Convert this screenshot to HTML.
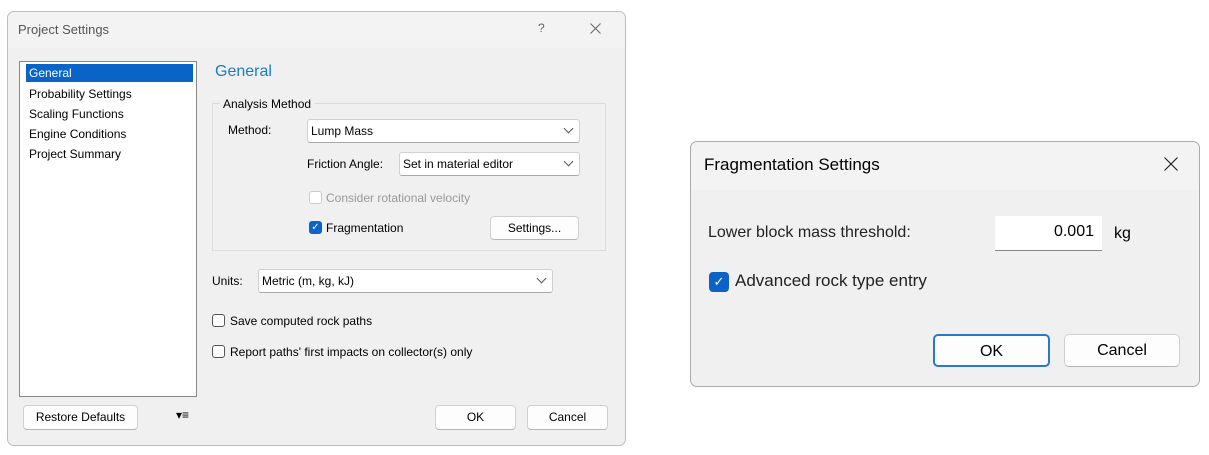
<!DOCTYPE html>
<html><head><style>
body{margin:0;width:1209px;height:455px;background:#fff;position:relative;overflow:hidden;font-family:"Liberation Sans",sans-serif;font-size:12px;color:#000}
.a{position:absolute}
.dlg{background:#f0f0f0;border:1px solid #bdbdbd;border-radius:7px;box-sizing:border-box}
.cb{background:#fff;border:1px solid #d0d0d0;border-bottom-color:#a8a8a8;border-radius:3px;box-sizing:border-box;padding:4px 3px;line-height:14px}
.btn{background:#fdfdfd;border:1px solid #d0d0d0;border-bottom-color:#b5b5b5;border-radius:4px;box-sizing:border-box;text-align:center}
.chk{width:13px;height:13px;border:1px solid #555;border-radius:3px;box-sizing:border-box;background:#fff}
.on{background:#0a64c8;border-color:#0a64c8}
.arr{position:absolute;right:7px;top:5px;width:6px;height:6px;border-right:1px solid #555;border-bottom:1px solid #555;transform:rotate(45deg)}
</style></head><body>
<div class="a dlg" style="left:7px;top:11px;width:619px;height:435px"></div>
<div class="a" style="left:8px;top:12px;width:617px;height:36px;background:#f3f3f3;border-radius:7px 7px 0 0"></div>
<div class="a" style="left:18px;top:22px;font-size:13px;color:#555">Project Settings</div>
<div class="a" style="left:538px;top:21px;color:#666">?</div>
<svg class="a" style="left:590px;top:23px" width="11" height="11"><path d="M0.5 0.5L10.5 10.5M10.5 0.5L0.5 10.5" stroke="#666" stroke-width="1"/></svg>
<div class="a" style="left:19px;top:61px;width:178px;height:336px;background:#fff;border:1px solid #888;box-sizing:border-box"></div>
<div class="a" style="left:26px;top:64px;width:167px;height:18px;background:#0a64c8"></div>
<div class="a" style="left:29px;top:66px;color:#fff">General</div>
<div class="a" style="left:29px;top:84px;line-height:20px">Probability Settings<br>Scaling Functions<br>Engine Conditions<br>Project Summary</div>
<div class="a" style="left:215px;top:63px;font-size:16px;color:#1a7cc4">General</div>
<div class="a" style="left:212px;top:103px;width:394px;height:148px;border:1px solid #dcdcdc;box-sizing:border-box"></div>
<div class="a" style="left:220px;top:97px;background:#f0f0f0;padding:0 3px">Analysis Method</div>
<div class="a" style="left:228px;top:123px">Method:</div>
<div class="a cb" style="left:307px;top:119px;width:273px;height:24px">Lump Mass<div class="arr"></div></div>
<div class="a" style="left:307px;top:157px">Friction Angle:</div>
<div class="a cb" style="left:399px;top:152px;width:181px;height:24px">Set in material editor<div class="arr"></div></div>
<div class="a chk" style="left:309px;top:191px;border-color:#ccc"></div>
<div class="a" style="left:326px;top:191px;color:#999">Consider rotational velocity</div>
<div class="a chk on" style="left:309px;top:221px;color:#fff;font-size:10px;line-height:11px;text-align:center">✓</div>
<div class="a" style="left:326px;top:221px">Fragmentation</div>
<div class="a btn" style="left:490px;top:216px;width:89px;height:24px;line-height:22px">Settings...</div>
<div class="a" style="left:212px;top:274px">Units:</div>
<div class="a cb" style="left:258px;top:269px;width:295px;height:24px">Metric (m, kg, kJ)<div class="arr"></div></div>
<div class="a chk" style="left:212px;top:314px"></div>
<div class="a" style="left:230px;top:314px">Save computed rock paths</div>
<div class="a chk" style="left:212px;top:345px"></div>
<div class="a" style="left:230px;top:345px">Report paths' first impacts on collector(s) only</div>
<div class="a btn" style="left:23px;top:405px;width:115px;height:25px;line-height:23px">Restore Defaults</div>
<div class="a" style="left:176px;top:408px;font-size:12px">▾≡</div>
<div class="a btn" style="left:435px;top:405px;width:81px;height:25px;line-height:23px">OK</div>
<div class="a btn" style="left:527px;top:405px;width:81px;height:25px;line-height:23px">Cancel</div>

<div class="a dlg" style="left:690px;top:141px;width:510px;height:246px;border-color:#aaa"></div>
<div class="a" style="left:691px;top:142px;width:508px;height:48px;background:#f3f3f3;border-radius:7px 7px 0 0"></div>
<div class="a" style="left:704px;top:155px;font-size:17px">Fragmentation Settings</div>
<svg class="a" style="left:1164px;top:157px" width="14" height="14"><path d="M0.5 0.5L13.5 13.5M13.5 0.5L0.5 13.5" stroke="#222" stroke-width="1.2"/></svg>
<div class="a" style="left:708px;top:224px;font-size:16px;color:#222">Lower block mass threshold:</div>
<div class="a" style="left:995px;top:216px;width:107px;height:35px;background:#fff;border-bottom:1px solid #888;box-sizing:border-box;text-align:right;padding:7px 8px 0 0;font-size:16px">0.001</div>
<div class="a" style="left:1114px;top:225px;font-size:16px">kg</div>
<div class="a" style="left:709px;top:272px;width:20px;height:20px;background:#0a64c8;border-radius:4px;color:#fff;text-align:center;font-size:13px;line-height:20px">✓</div>
<div class="a" style="left:735px;top:271px;font-size:17px;color:#222">Advanced rock type entry</div>
<div class="a btn" style="left:933px;top:334px;width:117px;height:33px;line-height:31px;font-size:16px;border:2px solid #2a78c8;border-radius:5px">OK</div>
<div class="a btn" style="left:1064px;top:334px;width:116px;height:33px;line-height:31px;font-size:16px;border-radius:5px">Cancel</div>
</body></html>
